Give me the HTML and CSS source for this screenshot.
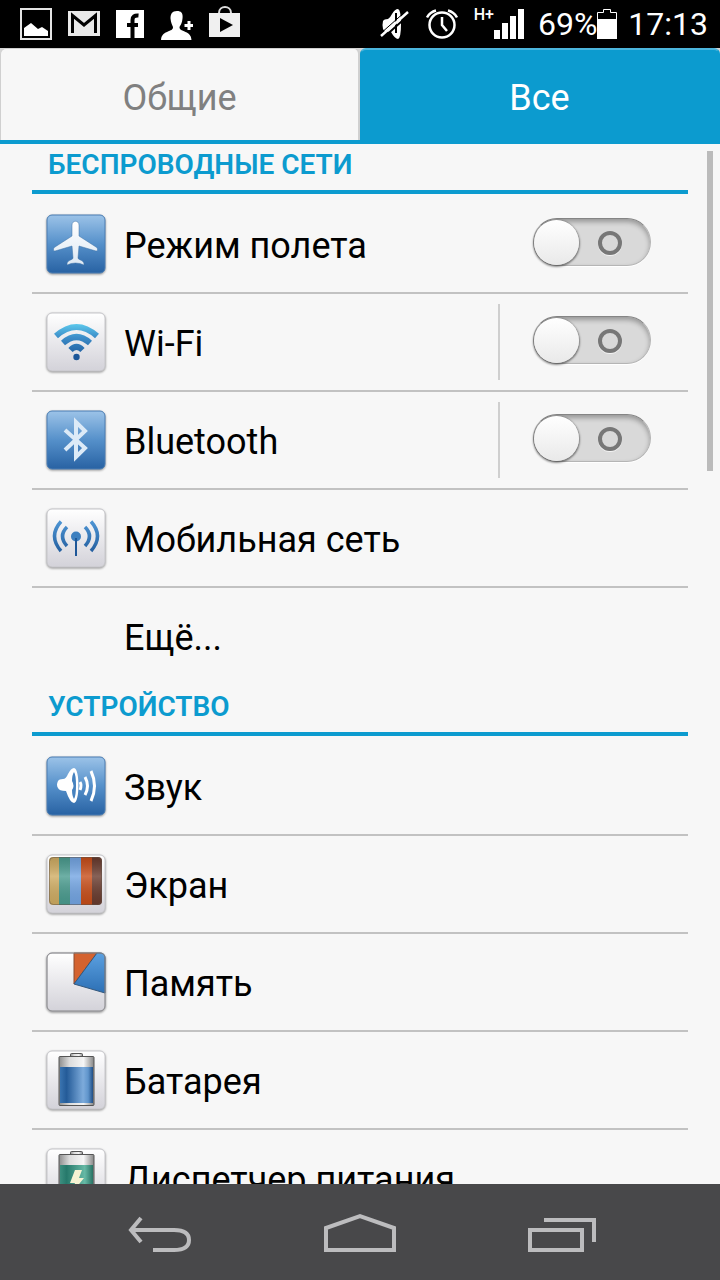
FILE: index.html
```html
<!DOCTYPE html>
<html lang="ru">
<head>
    <meta charset="UTF-8">
    <meta name="viewport" content="width=device-width, initial-scale=1.0">
    <title>Настройки</title>
    <link rel="stylesheet" href="styles.css">
</head>
<body>
    <!-- общие градиенты для иконок -->
    <svg class="defs" width="0" height="0" aria-hidden="true">
        <defs>
            <linearGradient id="blue" x1="0" y1="0" x2="0" y2="1">
                <stop offset="0" stop-color="#9cc3e8"/>
                <stop offset="0.5" stop-color="#5590ca"/>
                <stop offset="1" stop-color="#2862a3"/>
            </linearGradient>
            <linearGradient id="light" x1="0" y1="0" x2="0" y2="1">
                <stop offset="0" stop-color="#ffffff"/>
                <stop offset="1" stop-color="#d3d2d9"/>
            </linearGradient>
            <linearGradient id="glyph" x1="0" y1="0" x2="0" y2="1">
                <stop offset="0" stop-color="#ffffff"/>
                <stop offset="1" stop-color="#dde8f3"/>
            </linearGradient>
            <linearGradient id="wave" gradientUnits="userSpaceOnUse" x1="0" y1="12" x2="0" y2="46">
                <stop offset="0" stop-color="#5cc8ec"/>
                <stop offset="0.4" stop-color="#3c8cc8"/>
                <stop offset="1" stop-color="#1c5799"/>
            </linearGradient>
            <linearGradient id="radio" gradientUnits="userSpaceOnUse" x1="0" y1="12" x2="0" y2="48">
                <stop offset="0" stop-color="#4f97d6"/>
                <stop offset="1" stop-color="#1e5798"/>
            </linearGradient>
            <linearGradient id="pie" x1="0" y1="0" x2="0" y2="1">
                <stop offset="0" stop-color="#5ba0e0"/>
                <stop offset="1" stop-color="#2d70b5"/>
            </linearGradient>
            <linearGradient id="shade" x1="0" y1="0" x2="0" y2="1">
                <stop offset="0" stop-color="#000000" stop-opacity="0.12"/>
                <stop offset="0.4" stop-color="#ffffff" stop-opacity="0.2"/>
                <stop offset="1" stop-color="#000000" stop-opacity="0.08"/>
            </linearGradient>
            <linearGradient id="cap">
                <stop offset="0" stop-color="#8d8d8d"/>
                <stop offset="0.3" stop-color="#dcdcdc"/>
                <stop offset="0.7" stop-color="#f6f6f6"/>
                <stop offset="1" stop-color="#858585"/>
            </linearGradient>
            <linearGradient id="charge">
                <stop offset="0" stop-color="#3a74b0"/>
                <stop offset="0.2" stop-color="#245b98"/>
                <stop offset="0.7" stop-color="#7dabdb"/>
                <stop offset="0.85" stop-color="#6095cc"/>
                <stop offset="1" stop-color="#204f86"/>
            </linearGradient>
            <linearGradient id="green">
                <stop offset="0" stop-color="#3d8f80"/>
                <stop offset="0.2" stop-color="#26796b"/>
                <stop offset="0.75" stop-color="#66b9a5"/>
                <stop offset="1" stop-color="#287264"/>
            </linearGradient>
        </defs>
    </svg>

    <header class="status-bar">
        <div class="status-group notifications">
            <svg width="32" height="32" viewBox="0 0 32 32">
                <rect x="1" y="1" width="30" height="30" fill="none" stroke="#e4e4e4" stroke-width="2"/>
                <path d="M4 28V20l7-5 7 6 4-2 6 4v5z" fill="#fff"/>
            </svg>
            <svg width="32" height="32" viewBox="0 0 32 32">
                <rect y="3" width="32" height="25" fill="#e8e8e8"/>
                <path d="M4.500 25V7.500L16 17 27.500 7.500V25" fill="none" stroke="#000" stroke-width="3"/>
            </svg>
            <svg width="28" height="32" viewBox="0 0 28 32">
                <rect y="2" width="28" height="28" fill="#fff"/>
                <path d="M16.500 30V12q0-5 6-4.500M11 17h11" fill="none" stroke="#000" stroke-width="4"/>
            </svg>
            <svg width="33" height="32" viewBox="0 0 33 32">
                <path d="M17 3c5 0 6 3 5.500 7.500s-1.500 6-3 8.500c0 3 2 3 6 5 4 1.500 6 4 6 9H1c0-5 2-7.500 6-9 4-2 6-2 6-5-1-2.500-2-4-2.500-8.500C10.500 6 12 3 17 3z" fill="#fff"/>
                <path d="M29 13v9M24.500 17.500h9" stroke="#fff" stroke-width="3"/>
            </svg>
            <svg class="store" width="31" height="36" viewBox="0 0 31 36">
                <path d="M10 9c0-8 12-8 12 0" fill="none" stroke="#ddd" stroke-width="2"/>
                <rect y="9" width="31" height="24" fill="#f0f0f0"/>
                <path d="M11 14l13 7-13 7z" fill="#000"/>
            </svg>
        </div>
        <div class="status-group indicators">
            <svg class="mute" width="30" height="32" viewBox="0 0 30 32">
                <path d="M3 13q1-2 5-2 2-1 4-5 3-5 6-5 3 1 3 15t-3 15q-3 0-7-7-7 0-8-3-1-4 0-8z" fill="#fff"/>
                <path d="M16 5v20" stroke="#000" stroke-width="2"/>
                <path d="M3 30L30 6" stroke="#000" stroke-width="2"/>
                <path d="M1 28L28 4" stroke="#fff" stroke-width="2.500"/>
                <path d="M0 26L26 3" stroke="#000"/>
            </svg>
            <svg class="alarm" width="32" height="32" viewBox="0 0 32 32" fill="none" stroke="#fff">
                <circle cx="16" cy="17" r="12.500" stroke-width="2.500"/>
                <path d="M16 9v8l5 6M1 9.500Q4 4 10 2.500M31 9.500Q28 4 22 2.500" stroke-width="2.500"/>
            </svg>
            <span class="network">H+</span>
            <svg width="30" height="32" viewBox="0 0 30 32" fill="#fff">
                <path d="M0 22h6v9H0zM8 15h6v16H8zM16 8h6v23h-6zM24 1h6v30h-6z"/>
            </svg>
            <span class="percent">69%</span>
            <svg width="20" height="32" viewBox="0 0 20 32">
                <path d="M.500 30.500V4.500h6v-3h7v3h6v26z" fill="none" stroke="#fff"/>
                <path d="M0 11h20v20H0z" fill="#fff"/>
            </svg>
            <time class="clock">17:13</time>
        </div>
    </header>

    <nav class="tabs">
        <button class="tab" type="button">Общие</button>
        <button class="tab active" type="button">Все</button>
    </nav>

    <main class="content">
        <div class="settings">
            <section>
                <h2 class="section-title">БЕСПРОВОДНЫЕ СЕТИ</h2>
                <ul class="list">
                    <li class="row">
                        <svg class="icon" viewBox="0 0 60 60">
                            <rect class="tile-blue" x="1" y="1" width="58" height="58" rx="5"/>
                            <path d="M26 22V11c0-5 7-5 7 0v11l17 11c2 1 2 4 0 4l-17-5-1 12c0 2 6 2 6 6v1q-4-2-8.500-2T21 51v-1c0-4 6-4 6-6l-1-12-17 5c-2 0-2-3 0-4z" fill="url(#glyph)" stroke="#3d70a5" stroke-width=".5"/>
                        </svg>
                        <label class="name" for="airplane">Режим полета</label>
                        <div class="control"><input class="switch" type="checkbox" id="airplane"></div>
                    </li>
                    <li class="row">
                        <svg class="icon" viewBox="0 0 60 60">
                            <rect class="tile-light" x="1" y="1" width="58" height="58" rx="5"/>
                            <g fill="none" stroke="url(#wave)" stroke-width="6">
                                <path d="M10 24Q30.500 6 51 24"/>
                                <path d="M17 31Q30.500 19 44 31"/>
                                <path d="M24.500 38Q30.500 32 36.500 38"/>
                            </g>
                            <circle cx="30.500" cy="45" r="3.200" fill="#1c5799"/>
                        </svg>
                        <label class="name" for="wifi">Wi-Fi</label>
                        <div class="control divided"><input class="switch" type="checkbox" id="wifi"></div>
                    </li>
                    <li class="row">
                        <svg class="icon" viewBox="0 0 60 60">
                            <rect class="tile-blue" x="1" y="1" width="58" height="58" rx="5"/>
                            <path d="M19 20l20 18-9 9V12l9 9-20 19" fill="none" stroke="#dceaf7" stroke-width="4"/>
                        </svg>
                        <label class="name" for="bluetooth">Bluetooth</label>
                        <div class="control divided"><input class="switch" type="checkbox" id="bluetooth"></div>
                    </li>
                    <li class="row">
                        <svg class="icon" viewBox="0 0 60 60">
                            <rect class="tile-light" x="1" y="1" width="58" height="58" rx="5"/>
                            <g fill="none" stroke="url(#radio)" stroke-width="3.500">
                                <path d="M15 13.500Q2 28 15 43"/>
                                <path d="M21 19Q12 28 21 38"/>
                                <path d="M45 13.500Q58 28 45 43"/>
                                <path d="M39 19Q48 28 39 38"/>
                            </g>
                            <circle cx="30" cy="28.500" r="5" fill="#3c7fbf"/>
                            <path d="M29 30h2v18h-2z" fill="#1e5798"/>
                        </svg>
                        <span class="name">Мобильная сеть</span>
                    </li>
                    <li class="row">
                        <span class="icon"></span>
                        <span class="name">Ещё...</span>
                    </li>
                </ul>
            </section>

            <section>
                <h2 class="section-title">УСТРОЙСТВО</h2>
                <ul class="list">
                    <li class="row">
                        <svg class="icon" viewBox="0 0 60 60">
                            <rect class="tile-blue" x="1" y="1" width="58" height="58" rx="5"/>
                            <path d="M12 25q1-2 5-2 3 0 5-5 3-6 6-6c6 0 6 35 0 35q-4 0-8-12-7 0-8-3-2-3 0-7z" fill="#fff"/>
                            <path d="M28 16q2 3 2 13.500T28 43q-2-3-2-9 3-4 0-9 0-6 2-9z" fill="#4682bf"/>
                            <path d="M34 26q2 3 0 8M39 21q5 9 0 18M45 15q7 15 0 30" fill="none" stroke="#fff" stroke-width="3"/>
                        </svg>
                        <span class="name">Звук</span>
                    </li>
                    <li class="row">
                        <svg class="icon" viewBox="0 0 60 60">
                            <rect class="tile-light" x="1" y="1" width="58" height="58" rx="5"/>
                            <clipPath id="screen"><rect x="3" y="3" width="53" height="48" rx="4"/></clipPath>
                            <g clip-path="url(#screen)">
                                <path d="M3 3h11v48H3z" fill="#cfac62"/>
                                <path d="M13 3h11v48H13z" fill="#4a9c8f"/>
                                <path d="M24 3h11v48H24z" fill="#73a5e3"/>
                                <path d="M35 3h11v48H35z" fill="#c74d19"/>
                                <path d="M46 3h11v48H46z" fill="#693b2e"/>
                                <path d="M3 3h53v48H3z" fill="url(#shade)"/>
                            </g>
                            <rect x="3.500" y="3.500" width="52" height="47" rx="4" fill="none" stroke="#5f5148" stroke-opacity=".5"/>
                        </svg>
                        <span class="name">Экран</span>
                    </li>
                    <li class="row">
                        <svg class="icon" viewBox="0 0 60 60">
                            <rect class="tile-light" x="1" y="1" width="58" height="58" rx="5"/>
                            <path d="M28 1h23L28 32z" fill="#d4622f" stroke="#8a4a2e"/>
                            <path d="M51 1h3q5 0 5 5v35L28 32z" fill="url(#pie)" stroke="#35587c"/>
                            <rect x="1" y="1" width="58" height="58" rx="5" fill="none" stroke="#88888c"/>
                        </svg>
                        <span class="name">Память</span>
                    </li>
                    <li class="row">
                        <svg class="icon" viewBox="0 0 60 60">
                            <rect class="tile-light" x="1" y="1" width="58" height="58" rx="5"/>
                            <rect x="24.500" y="3.500" width="12" height="4" rx="1" fill="url(#cap)" stroke="#555"/>
                            <rect x="13" y="6.500" width="35" height="49" rx="1" fill="url(#cap)" stroke="#555"/>
                            <path d="M14 17h33v36H14z" fill="url(#charge)"/>
                        </svg>
                        <span class="name">Батарея</span>
                    </li>
                    <li class="row">
                        <svg class="icon" viewBox="0 0 60 60">
                            <rect class="tile-light" x="1" y="1" width="58" height="58" rx="5"/>
                            <rect x="24.500" y="3.500" width="12" height="4" rx="1" fill="url(#cap)" stroke="#555"/>
                            <rect x="13" y="6.500" width="35" height="49" rx="1" fill="url(#cap)" stroke="#555"/>
                            <path d="M14 17h33v36H14z" fill="url(#green)"/>
                            <path d="M29 22h7l-3 8h5L25 46l4-11h-5z" fill="#f6f3d3"/>
                        </svg>
                        <span class="name">Диспетчер питания</span>
                    </li>
                </ul>
            </section>
        </div>
        <div class="scroll-thumb"></div>
    </main>

    <footer class="nav-bar">
        <button class="nav-btn" type="button" aria-label="Назад">
            <svg width="72" height="48" viewBox="0 0 72 48">
                <path d="M9 17h43q15 0 15 10T52 37H31"/>
                <path d="M19 5L9 17l10 12"/>
            </svg>
        </button>
        <button class="nav-btn" type="button" aria-label="Домой">
            <svg width="72" height="48" viewBox="0 0 72 48">
                <path d="M2 37V15L36 3l34 12v22z"/>
            </svg>
        </button>
        <button class="nav-btn" type="button" aria-label="Недавние">
            <svg width="72" height="48" viewBox="0 0 72 48">
                <path d="M4 17h52v20H4zM18 7h50v22"/>
            </svg>
        </button>
    </footer>
</body>
</html>
```
FILE: styles.css
```css
* {
    margin: 0;
    padding: 0;
    box-sizing: border-box;
}

body {
    height: 100vh;
    display: flex;
    flex-direction: column;
    background: #f7f7f7;
    color: #000;
    font-family: Roboto, "Noto Sans", sans-serif;
    font-size: 36px;
}

svg {
    display: block;
    flex: none;
}

.defs {
    position: absolute;
}

button {
    border: none;
    background: none;
    font: inherit;
    cursor: pointer;
}

/* Строка состояния */
.status-bar {
    flex: none;
    display: flex;
    justify-content: space-between;
    height: 48px;
    padding: 0 12px 0 20px;
    background: #000;
    color: #fff;
    font-size: 32px;
}

.status-group {
    display: flex;
    align-items: center;
}

.notifications {
    gap: 16px;
}

.store {
    margin-bottom: 4px;
}

.mute,
.alarm {
    margin-right: 16px;
}

.network {
    align-self: flex-start;
    padding-top: 5px;
    font-size: 16px;
    font-weight: 500;
    line-height: 20px;
}

.percent {
    margin-left: 14px;
}

.clock {
    margin-left: 11px;
}

/* Вкладки */
.tabs {
    flex: none;
    display: flex;
    height: 96px;
    border-bottom: 4px solid #0c9bcf;
    background: #d6d6d6;
}

.tab {
    flex: 1;
    padding-top: 6px;
    border: 1px solid #d0d0d0;
    border-right-width: 2px;
    border-bottom: none;
    border-radius: 6px 6px 0 0;
    background: #f7f7f7;
    color: #808080;
}

.tab.active {
    border-color: #0c9bcf;
    border-top: 2px solid #4bb5dd;
    background: #0c9bcf;
    color: #fff;
}

/* Список настроек */
.content {
    flex: 1;
    min-height: 0;
    position: relative;
}

.settings {
    height: 100%;
    padding: 0 32px;
    overflow-y: auto;
    scrollbar-width: none;
}

.section-title {
    height: 52px;
    margin-bottom: 2px;
    padding-left: 16px;
    border-bottom: 4px solid #0c9bcf;
    color: #0c9bcf;
    font-size: 28px;
    font-weight: 600;
    line-height: 46px;
}

section:first-child .section-title {
    height: 50px;
    line-height: 42px;
}

.list {
    list-style: none;
}

.row {
    display: flex;
    align-items: center;
    height: 98px;
    padding-left: 14px;
    border-bottom: 2px solid #c2c2c2;
}

.row:last-child {
    height: 96px;
    border-bottom: none;
}

.icon {
    flex: none;
    width: 60px;
    height: 60px;
    filter: drop-shadow(0 1px 1px rgba(0, 0, 0, 0.4));
}

.tile-blue {
    fill: url(#blue);
    stroke: #4a7db3;
}

.tile-light {
    fill: url(#light);
    stroke: #c6c6ca;
}

.name {
    flex: 1;
    padding: 4px 0 0 18px;
    white-space: nowrap;
}

/* Переключатели */
.control {
    display: flex;
    align-items: center;
    height: 76px;
    padding: 0 37px 4px 33px;
    border-left: 2px solid transparent;
}

.control.divided {
    border-left-color: #cfcfcf;
}

.switch {
    appearance: none;
    display: flex;
    align-items: center;
    gap: 19px;
    width: 118px;
    height: 48px;
    border: 1px solid #b5b5b5;
    border-top-color: #858585;
    border-radius: 24px;
    background: #d9d9d9;
    box-shadow: inset 0 3px 5px rgba(0, 0, 0, 0.3), 0 1px 0 #fff;
    cursor: pointer;
}

.switch::before,
.switch::after {
    content: '';
    box-sizing: border-box;
    border-radius: 50%;
}

.switch::before {
    width: 45px;
    height: 45px;
    background: linear-gradient(#fff, #e9e9e9);
    box-shadow: 0 1px 2px 1px rgba(0, 0, 0, 0.45);
}

.switch::after {
    width: 24px;
    height: 24px;
    margin-top: 2px;
    border: 4px solid #777;
    box-shadow: 0 1px 0 #f4f4f4;
}

.switch:checked {
    flex-direction: row-reverse;
    background: #0c9bcf;
}

.scroll-thumb {
    position: absolute;
    top: 7px;
    right: 7px;
    width: 6px;
    height: 320px;
    background: #bbb;
}

/* Панель навигации */
.nav-bar {
    flex: none;
    display: flex;
    justify-content: center;
    gap: 130px;
    height: 96px;
    background: #48484a;
}

.nav-btn {
    display: flex;
    align-items: center;
    padding-top: 10px;
}

.nav-btn svg {
    fill: none;
    stroke: #bcbcbe;
    stroke-width: 4;
}
```
